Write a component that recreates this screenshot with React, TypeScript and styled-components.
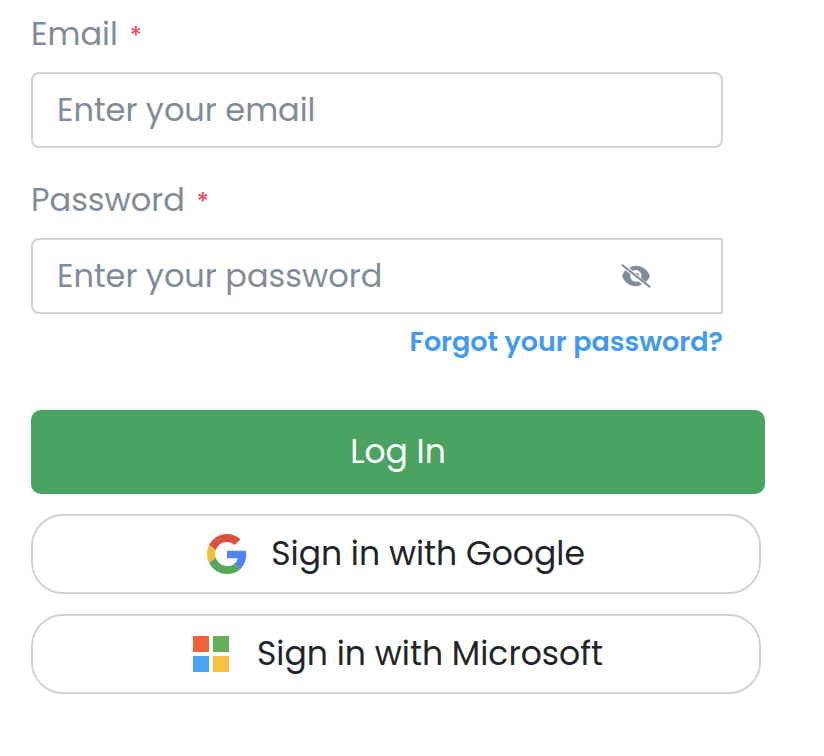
import React, { useState } from 'react';
import styled, { createGlobalStyle } from 'styled-components';
import { FaEye } from 'react-icons/fa';

const GlobalStyle = createGlobalStyle`
  *, *::before, *::after { box-sizing: border-box; }
  body {
    margin: 0;
    background: #fff;
    color: #212529;
    font-family: Poppins, Inter, sans-serif;
    font-size: 32px;
  }
  input, button { font: inherit; }
`;

const Form = styled.form`
  display: flex;
  flex-direction: column;
  padding: 10px 59px 60px 31px;
`;

const Fields = styled.div`
  display: flex;
  flex-direction: column;
  gap: 28px;
  margin-right: 42px;
`;

const Field = styled.div`
  display: flex;
  flex-direction: column;
  gap: 14px;
`;

const Label = styled.label`
  line-height: 48px;
  color: #808b98;
`;

const Required = styled.span`
  margin-left: 12px;
  font-size: 24px;
  font-weight: 500;
  line-height: 24px;
  color: #ea4c62;
`;

const InputGroup = styled.div<{ $squareEnd?: boolean }>`
  display: flex;
  align-items: center;
  height: 76px;
  border: 2px solid #ced4da;
  border-radius: ${({ $squareEnd }) => ($squareEnd ? '8px 0 0 8px' : '8px')};
  background: #fff;
`;

const Input = styled.input`
  flex: 1;
  min-width: 0;
  height: 100%;
  padding: 0 24px;
  border: 0;
  outline: 0;
  background: transparent;
  color: #212529;

  &::placeholder {
    color: #808b98;
    opacity: 1;
  }
`;

const RevealButton = styled.button`
  display: flex;
  align-items: center;
  justify-content: center;
  width: 50px;
  height: 48px;
  margin-right: 60px;
  padding: 0;
  border: 0;
  background: transparent;
  color: #808b98;
  cursor: pointer;

  svg {
    width: 30px;
    height: 24px;
  }
`;

const ForgotLink = styled.a`
  align-self: flex-end;
  margin: 8px 42px 48px 0;
  font-size: 27px;
  font-weight: 600;
  line-height: 40px;
  color: #4299ee;
  text-decoration: none;
`;

const LoginButton = styled.button`
  height: 84px;
  border: 0;
  border-radius: 10px;
  background: #4ba361;
  color: #fff;
  font-size: 33px;
  cursor: pointer;
`;

const Providers = styled.div`
  display: flex;
  flex-direction: column;
  gap: 20px;
  margin: 20px 4px 0 0;
`;

const ProviderButton = styled.button<{ $gap: number }>`
  display: flex;
  align-items: center;
  justify-content: center;
  gap: ${({ $gap }) => $gap}px;
  height: 80px;
  padding: 0 24px;
  border: 2px solid #ced4da;
  border-radius: 32px;
  background: #fff;
  color: #212529;
  font-size: 33px;
  cursor: pointer;
`;

const EyeOff = () => (
  <svg viewBox="0 0 30 24" fill="none" aria-hidden="true">
    <path
      fill="currentColor"
      d="M8.200 3.800C10.200 2.500 12.500 1.800 15 1.800c6.200 0 11.200 4 13.600 9.300.3.600.3 1.200 0 1.800-.9 1.900-2.100 3.600-3.700 5l-4.900-3.900c.3-.7.400-1.300.400-2A5.500 5.500 0 0 0 12 7z"
    />
    <path
      fill="currentColor"
      d="M4.300 6.200 9.600 10.300C9.400 10.900 9.300 11.400 9.300 12a5.700 5.700 0 0 0 8 5.200l3.700 3C19.200 21.500 17.200 22.200 15 22.200c-6.200 0-11.200-4-13.600-9.300-.3-.6-.3-1.200 0-1.800.7-1.900 1.700-3.500 2.900-4.900z"
    />
    <path fill="currentColor" d="M14.300 9A3.400 3.400 0 0 1 18.400 12.500z" />
    <path stroke="currentColor" strokeWidth="2" strokeLinecap="round" d="m1.500 1.200 27 21.400" />
  </svg>
);

const GoogleLogo = () => (
  <svg width="40" height="40" viewBox="0 0 48 48" aria-hidden="true">
    <path fill="#d8503f" d="M24 9.5c3.54 0 6.71 1.22 9.21 3.6l6.85-6.85C35.9 2.38 30.47 0 24 0 14.62 0 6.51 5.38 2.56 13.22l7.98 6.19C12.43 13.72 17.74 9.5 24 9.5z" />
    <path fill="#5383ec" d="M46.98 24.55c0-1.57-.15-3.09-.38-4.55H24v9.02h12.94c-.58 2.96-2.26 5.48-4.78 7.18l7.73 6c4.51-4.18 7.09-10.36 7.09-17.65z" />
    <path fill="#f1be42" d="M10.53 28.59c-.48-1.45-.76-2.99-.76-4.59s.27-3.14.76-4.59l-7.98-6.19C.92 16.46 0 20.12 0 24c0 3.88.92 7.54 2.56 10.78l7.97-6.19z" />
    <path fill="#58a55c" d="M24 48c6.48 0 11.93-2.13 15.89-5.81l-7.73-6c-2.15 1.45-4.92 2.3-8.16 2.3-6.26 0-11.57-4.22-13.47-9.91l-7.98 6.19C6.51 42.62 14.62 48 24 48z" />
  </svg>
);

const MicrosoftLogo = () => (
  <svg width="40" height="36" viewBox="-4 0 40 36" shapeRendering="crispEdges" aria-hidden="true">
    <path fill="#ec6337" d="M0 0h16v16H0z" />
    <path fill="#67ad5b" d="M20 0h16v16H20z" />
    <path fill="#4ba5ee" d="M0 20h16v16H0z" />
    <path fill="#f6c344" d="M20 20h16v16H20z" />
  </svg>
);

export default function App() {
  const [visible, setVisible] = useState(false);

  return (
    <>
      <GlobalStyle />
      <Form onSubmit={(event) => event.preventDefault()}>
        <Fields>
          <Field>
            <Label htmlFor="email">
              Email<Required>*</Required>
            </Label>
            <InputGroup>
              <Input id="email" type="email" placeholder="Enter your email" required />
            </InputGroup>
          </Field>
          <Field>
            <Label htmlFor="password">
              Password<Required>*</Required>
            </Label>
            <InputGroup $squareEnd>
              <Input
                id="password"
                type={visible ? 'text' : 'password'}
                placeholder="Enter your password"
                required
              />
              <RevealButton
                type="button"
                aria-label={visible ? 'Hide password' : 'Show password'}
                onClick={() => setVisible(!visible)}
              >
                {visible ? <FaEye /> : <EyeOff />}
              </RevealButton>
            </InputGroup>
          </Field>
        </Fields>
        <ForgotLink href="#forgot">Forgot your password?</ForgotLink>
        <LoginButton type="submit">Log In</LoginButton>
        <Providers>
          <ProviderButton type="button" $gap={24}>
            <GoogleLogo />
            Sign in with Google
          </ProviderButton>
          <ProviderButton type="button" $gap={28}>
            <MicrosoftLogo />
            Sign in with Microsoft
          </ProviderButton>
        </Providers>
      </Form>
    </>
  );
}
